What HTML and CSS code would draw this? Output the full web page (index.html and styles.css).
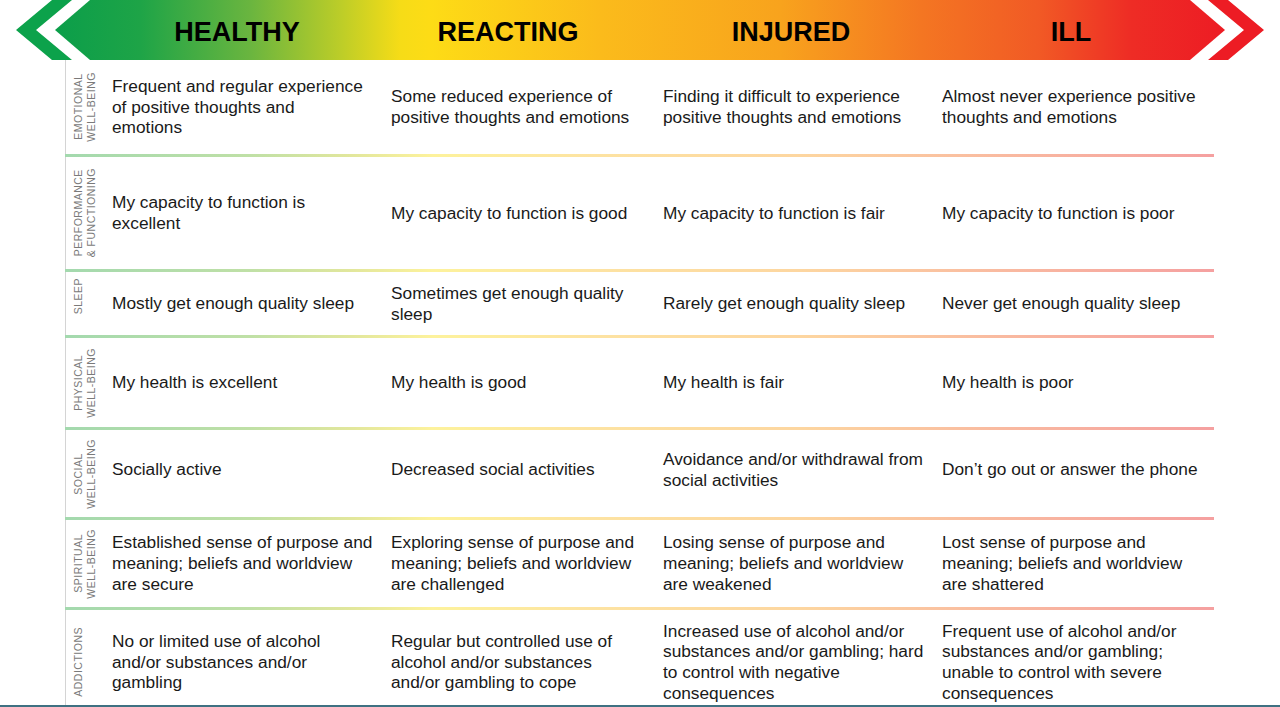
FILE: index.html
```html
<!DOCTYPE html>
<html lang="en">
<head>
<meta charset="utf-8">
<title>Mental Health Continuum</title>
<link rel="stylesheet" href="styles.css">
</head>
<body>
<div class="page">
  <header class="header">
    <svg class="header-art" width="1280" height="60" viewBox="0 0 1280 60" aria-hidden="true">
      <defs>
        <linearGradient id="band" gradientUnits="userSpaceOnUse" x1="55" y1="0" x2="1225" y2="0">
          <stop offset="0" stop-color="#0b9e4a"/>
          <stop offset="0.073" stop-color="#1ea447"/>
          <stop offset="0.167" stop-color="#6ab53f"/>
          <stop offset="0.244" stop-color="#bccd28"/>
          <stop offset="0.295" stop-color="#f6dc17"/>
          <stop offset="0.32" stop-color="#fddc16"/>
          <stop offset="0.466" stop-color="#fbbb1b"/>
          <stop offset="0.62" stop-color="#f8a31d"/>
          <stop offset="0.74" stop-color="#f47622"/>
          <stop offset="0.84" stop-color="#f15a25"/>
          <stop offset="0.92" stop-color="#ee2c25"/>
          <stop offset="1" stop-color="#ed1c24"/>
        </linearGradient>
      </defs>
      <polygon points="52,0 72,0 36,30 72,60 52,60 16,30" fill="#0ca24b"/>
      <polygon points="90,0 1190,0 1225,30 1190,60 90,60 55,30" fill="url(#band)"/>
      <polygon points="1228,0 1208,0 1244,30 1208,60 1228,60 1264,30" fill="#ed1c24"/>
    </svg>
    <div class="titles">
      <div class="title">HEALTHY</div>
      <div class="title">REACTING</div>
      <div class="title">INJURED</div>
      <div class="title">ILL</div>
    </div>
  </header>

  <section class="table">
    <div class="row r1">
      <div class="label"><span class="vtext">EMOTIONAL<br>WELL-BEING</span></div>
      <div class="cell">Frequent and regular experience<br>of positive thoughts and<br>emotions</div>
      <div class="cell">Some reduced experience of<br>positive thoughts and emotions</div>
      <div class="cell">Finding it difficult to experience<br>positive thoughts and emotions</div>
      <div class="cell">Almost never experience positive<br>thoughts and emotions</div>
    </div>
    <div class="divider"></div>
    <div class="row r2">
      <div class="label"><span class="vtext">PERFORMANCE<br>&amp; FUNCTIONING</span></div>
      <div class="cell">My capacity to function is<br>excellent</div>
      <div class="cell">My capacity to function is good</div>
      <div class="cell">My capacity to function is fair</div>
      <div class="cell">My capacity to function is poor</div>
    </div>
    <div class="divider"></div>
    <div class="row r3">
      <div class="label label-top"><span class="vtext">SLEEP</span></div>
      <div class="cell">Mostly get enough quality sleep</div>
      <div class="cell">Sometimes get enough quality<br>sleep</div>
      <div class="cell">Rarely get enough quality sleep</div>
      <div class="cell">Never get enough quality sleep</div>
    </div>
    <div class="divider"></div>
    <div class="row r4">
      <div class="label"><span class="vtext">PHYSICAL<br>WELL-BEING</span></div>
      <div class="cell">My health is excellent</div>
      <div class="cell">My health is good</div>
      <div class="cell">My health is fair</div>
      <div class="cell">My health is poor</div>
    </div>
    <div class="divider"></div>
    <div class="row r5">
      <div class="label"><span class="vtext">SOCIAL<br>WELL-BEING</span></div>
      <div class="cell">Socially active</div>
      <div class="cell">Decreased social activities</div>
      <div class="cell">Avoidance and/or withdrawal from<br>social activities</div>
      <div class="cell">Don’t go out or answer the phone</div>
    </div>
    <div class="divider"></div>
    <div class="row r6">
      <div class="label"><span class="vtext">SPIRITUAL<br>WELL-BEING</span></div>
      <div class="cell">Established sense of purpose and<br>meaning; beliefs and worldview<br>are secure</div>
      <div class="cell">Exploring sense of purpose and<br>meaning; beliefs and worldview<br>are challenged</div>
      <div class="cell">Losing sense of purpose and<br>meaning; beliefs and worldview<br>are weakened</div>
      <div class="cell">Lost sense of purpose and<br>meaning; beliefs and worldview<br>are shattered</div>
    </div>
    <div class="divider"></div>
    <div class="row r7">
      <div class="label"><span class="vtext">ADDICTIONS</span></div>
      <div class="cell">No or limited use of alcohol<br>and/or substances and/or<br>gambling</div>
      <div class="cell">Regular but controlled use of<br>alcohol and/or substances<br>and/or gambling to cope</div>
      <div class="cell">Increased use of alcohol and/or<br>substances and/or gambling; hard<br>to control with negative<br>consequences</div>
      <div class="cell">Frequent use of alcohol and/or<br>substances and/or gambling;<br>unable to control with severe<br>consequences</div>
    </div>
  </section>
</div>
</body>
</html>
```

FILE: styles.css
```css
html, body {
  margin: 0;
  padding: 0;
  background: #ffffff;
}

body {
  font-family: "Liberation Sans", Arial, sans-serif;
  color: #1a1a1a;
}

.page {
  width: 1280px;
  height: 707px;
  box-sizing: border-box;
  border-bottom: 2px solid #3f7182;
  overflow: hidden;
}

.header {
  position: relative;
  height: 60px;
}

.header-art {
  position: absolute;
  left: 0;
  top: 0;
  display: block;
}

.titles {
  position: relative;
  display: grid;
  grid-template-columns: 274px 268px 298px 262px;
  padding-left: 100px;
  height: 60px;
  align-items: center;
}

.title {
  text-align: center;
  font-weight: 700;
  font-size: 27px;
  line-height: 30px;
  padding-top: 4px;
  color: #000;
}

.table {
  margin-left: 65px;
  width: 1149px;
}

.row {
  display: grid;
  grid-template-columns: 40px 279px 272px 279px 279px;
  align-items: center;
}

.r1 { height: 94px; }
.r2 { height: 112px; }
.r3 { height: 63px; }
.r4 { height: 89px; }
.r5 { height: 87px; padding-bottom: 8px; box-sizing: border-box; }
.r6 { height: 87px; }
.r7 { height: 104px; }

.divider {
  height: 3px;
  background: linear-gradient(to right,
    #a3d9ae 0%,
    #bfe0a6 16%,
    #e2e79c 25%,
    #fdf29c 32%,
    #fde3a2 46%,
    #fdd6a0 64%,
    #f9b9a0 82%,
    #f5a0a0 100%);
}

.label {
  align-self: stretch;
  display: flex;
  align-items: center;
  padding-left: 6px;
  border-left: 1px solid #d4d4d4;
  box-sizing: border-box;
}

.label-top {
  align-items: flex-start;
  padding-top: 6px;
}

.r5 .label {
  margin-bottom: -8px;
}

.vtext {
  writing-mode: vertical-rl;
  transform: rotate(180deg);
  text-align: center;
  font-size: 10.5px;
  line-height: 13px;
  letter-spacing: 0.5px;
  color: #7a7a7a;
  white-space: nowrap;
}

.cell {
  padding-left: 7px;
  font-size: 17.3px;
  line-height: 20.7px;
  white-space: nowrap;
  color: #1a1a1a;
}
```
